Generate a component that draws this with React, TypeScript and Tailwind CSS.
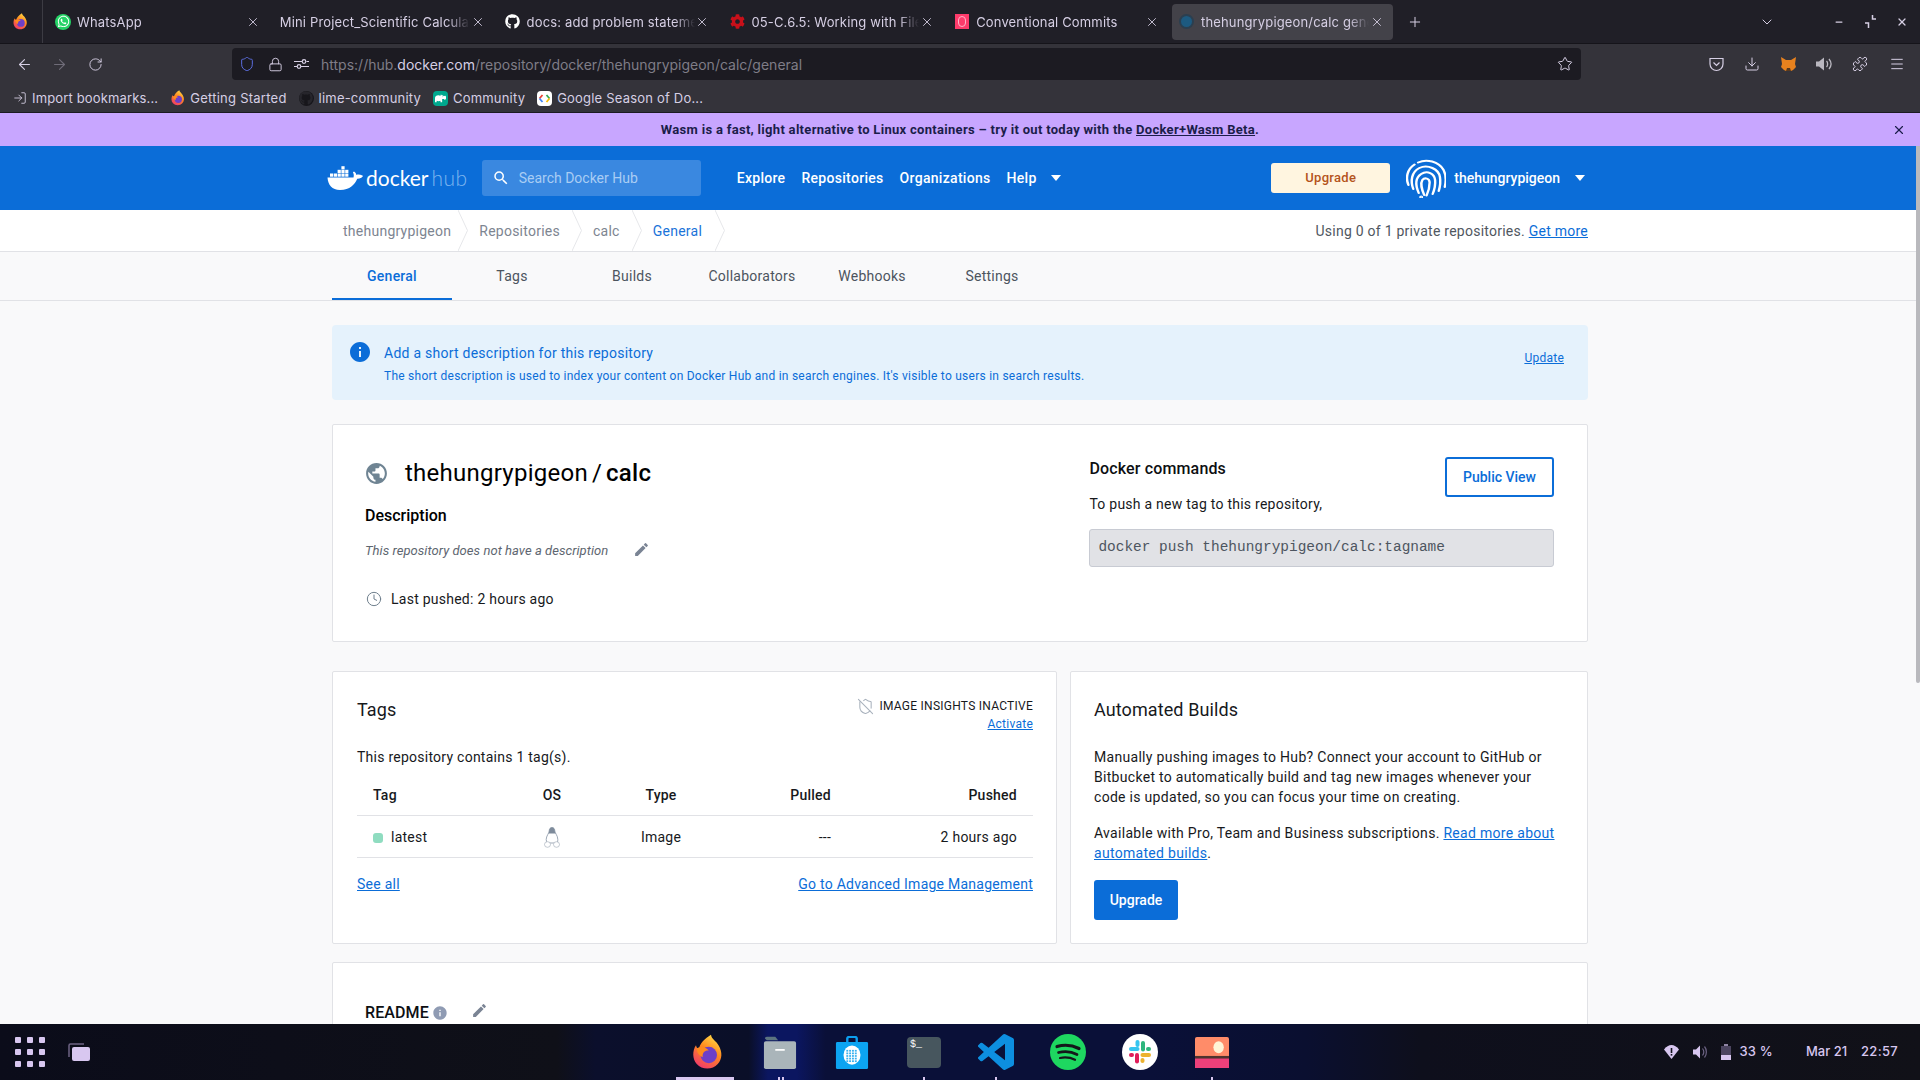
import React from "react";
import { ArrowLeft, ArrowRight, RotateCw, Lock, Star, Download, Puzzle, Menu, Shield, X, ChevronDown, Plus, Minus, Clock, ShieldOff, LogIn } from "lucide-react";
import { MdEdit, MdInfo, MdPublic, MdSearch } from "react-icons/md";
import { FaGithub, FaWhatsapp, FaCog, FaHippo } from "react-icons/fa";

function Firefox({ id, size }: { id: string; size: number }) {
  return (
    <svg width={size} height={size} viewBox="0 0 24 24" className="shrink-0">
      <defs>
        <linearGradient id={id} x1="0.8" y1="0" x2="0.3" y2="1">
          <stop offset="0" stopColor="#ffe04a" />
          <stop offset="0.45" stopColor="#ff8a1e" />
          <stop offset="1" stopColor="#f03a6a" />
        </linearGradient>
      </defs>
      <path d="M14 .5c.3 3 3.5 4 5 7 2.8 4.500 2.500 9.500-.5 12.500-3.500 4-10.500 4-14 0C1.500 16.800 1.500 11 4 7.500c.3 1.500 1 2.300 2 2.800C6.200 6.500 10 3 14 .5z" fill={`url(#${id})`} />
      <circle cx="12.500" cy="14" r="5.500" fill="#6d3fc8" />
      <path d="M4.500 9.500c3-1.500 6-1 8 1.500-2.500-.3-4.500 1.500-4 4.500-2.500-1-4-3.200-4-6z" fill="#ff8a1e" />
    </svg>
  );
}

function Tab({ title, icon, active, noIcon }: { title: string; icon?: React.ReactNode; active?: boolean; noIcon?: boolean }) {
  return (
    <div className={`w-[220.800px] h-9 rounded flex items-center shrink-0 pl-[7px] ${active ? "bg-[#434249]" : ""}`}>
      {icon && <span className="w-4 h-4 flex items-center justify-center mr-[6px] shrink-0">{icon}</span>}
      <span className={`${noIcon ? "w-[190px]" : "w-[168px]"} overflow-hidden whitespace-nowrap text-[13px] tracking-[0.15px] pt-[2px] text-[#d6cfe4] [mask-image:linear-gradient(to_right,black_88%,transparent)]`}>{title}</span>
      <X size={14} strokeWidth={1.500} className="text-[#d6cfe4] shrink-0 ml-auto mr-[9px]" />
    </div>
  );
}

function Chevron() {
  return (
    <svg width="10" height="41" viewBox="0 0 10 41" className="shrink-0">
      <path d="M0 0 L9.500 20.500 L0 41" fill="none" stroke="#e6e7ea" strokeWidth="1" />
    </svg>
  );
}

function Caret() {
  return (
    <svg width="10" height="6" viewBox="0 0 10 6" className="shrink-0">
      <polygon points="0,0 10,0 5,6" fill="#fff" />
    </svg>
  );
}

function Whale() {
  const rects: [number, number][] = [
    [3, 7.500], [6.800, 7.500], [10.600, 7.500], [14.400, 7.500], [18.200, 7.500],
    [10.600, 3.800], [14.400, 3.800], [18.200, 3.800], [14.400, 0.200],
  ];
  return (
    <svg width="37" height="24" viewBox="0 0 37 24" className="shrink-0">
      {rects.map(([x, y], i) => <rect key={i} x={x} y={y} width="3.200" height="3.200" fill="#fff" />)}
      <path d="M.5 11.500H26.500c.6-2 .3-3.600-.6-5.200l1.100-.9c1.400.9 2.200 2.100 2.400 3.500 1.700-.6 3.800-.4 6 .7l.6.400c-1.200 2.100-3.200 2.800-5.800 2.700C27.800 18.500 23 24 13 24 5 24 1 19 .5 11.500z" fill="#fff" />
    </svg>
  );
}

function Fingerprint() {
  return (
    <svg width="40" height="40" viewBox="3 0 33 40" preserveAspectRatio="none" fill="none" stroke="#fff" strokeWidth="2" strokeLinecap="round" className="shrink-0">
      <path d="M5 27C2.500 20 4 11 10 6.500" />
      <path d="M13 4.500C20 .5 30 3.500 34 12c2 5 2 12 1 17" />
      <path d="M9 31C6.500 23 7.500 14 14 10c7-4 16 1 17 9 .7 5 0 10-1 14" />
      <path d="M13.500 35C11 28 10.500 20 15.500 16c5-4 11-.5 11.500 6 .4 5-.5 9.500-2 14" />
      <path d="M18 37c-2-6-3.500-11-1.500-15 2-3 6-1.500 6 2.500 0 5-1 9-2.500 13" />
      <circle cx="15.500" cy="39" r=".6" />
    </svg>
  );
}

function Tux() {
  return (
    <svg width="16" height="21" viewBox="0 0 16 21" className="shrink-0 mt-[2px]">
      <path d="M8 .5c2 0 2.800 1.800 2.800 3.500 0 2 3 4.500 3 8.500 0 2-.5 3-1 3.500L3.500 16c-.7-.7-1.300-2-1.300-3.500C2.200 9 5.200 6 5.200 4 5.200 2.300 6 .5 8 .5z" fill="#fff" stroke="#8593a3" strokeWidth=".8" />
      <path d="M8 .5c2 0 2.800 1.800 2.800 3.500 0 1 .5 1.800 1 2.500H4.300c.5-.7.900-1.500.9-2.500C5.200 2.300 6 .5 8 .5z" fill="#7e8b9b" />
      <ellipse cx="3.500" cy="17.500" rx="3" ry="2.800" fill="#fff" stroke="#aab3bf" strokeWidth=".7" />
      <ellipse cx="12.500" cy="17.500" rx="3" ry="2.800" fill="#fff" stroke="#aab3bf" strokeWidth=".7" />
    </svg>
  );
}

function Dock() {
  return (
    <div className="flex items-center gap-[36px] ml-[600px]">
      <Firefox id="ffdock" size={36} />
      <svg width="34" height="33" viewBox="0 0 36 38" preserveAspectRatio="none" className="shrink-0 mx-[1px]">
        <path d="M2 3a2 2 0 0 1 2-2h9l3 4H4z" fill="#5c7480" />
        <rect x="1" y="6" width="34" height="32" rx="2" fill="#aab5ba" />
        <rect x="13" y="15" width="10" height="2" fill="#fff" />
      </svg>
      <svg width="34" height="33" viewBox="0 0 36 38" preserveAspectRatio="none" className="shrink-0 mx-[1px]">
        <path d="M13 7V3a2 2 0 0 1 2-2h6a2 2 0 0 1 2 2v4" fill="none" stroke="#0b9ef0" strokeWidth="2.500" />
        <rect x="1" y="7" width="34" height="31" rx="1.500" fill="#0ca4f2" />
        <ellipse cx="18" cy="22" rx="9" ry="11" fill="#fff" />
        <g fill="#39b1ef">
          {[16, 19, 22, 25, 28].map((y) => [12, 15, 18, 21].map((x) => <rect key={`${x}-${y}`} x={x} y={y} width="2" height="2" />))}
        </g>
      </svg>
      <div className="w-[34px] h-[31px] mx-[1px] rounded-sm bg-[#47565e] shrink-0 flex items-start justify-start pl-[3px] pt-[1px] text-[10px] leading-[14px] text-white [font-family:'Liberation_Mono',monospace]">$_</div>
      <svg width="36" height="36" viewBox="0 0 24 24" preserveAspectRatio="none" className="shrink-0">
        <path d="M23.150 2.587L18.210.21a1.494 1.494 0 0 0-1.705.29l-9.460 8.630-4.120-3.128a.999.999 0 0 0-1.276.057L.327 7.261A1 1 0 0 0 .326 8.740L3.899 12 .326 15.260a1 1 0 0 0 .001 1.479L1.650 17.940a.999.999 0 0 0 1.276.057l4.120-3.128 9.460 8.630a1.492 1.492 0 0 0 1.704.29l4.942-2.377A1.500 1.500 0 0 0 24 20.060V3.939a1.500 1.500 0 0 0-.85-1.352zm-5.146 14.861L10.826 12l7.178-5.448v10.896z" fill="#0d8fe0" />
      </svg>
      <svg width="36" height="36" viewBox="0 0 36 36" fill="none" stroke="#14171a" strokeLinecap="round" className="shrink-0">
        <circle cx="18" cy="18" r="18" fill="#1ed760" stroke="none" />
        <path d="M7 12.500c7-2 15-1.500 22 2" strokeWidth="3.200" />
        <path d="M8.500 18.500c6-1.500 13-1 18.500 2" strokeWidth="2.700" />
        <path d="M10 24c5-1 10-.7 15 1.800" strokeWidth="2.200" />
      </svg>
      <svg width="36" height="36" viewBox="0 0 36 36" strokeLinecap="round" fill="none" className="shrink-0">
        <circle cx="18" cy="18" r="18" fill="#fff" />
        <path d="M9 15h6.500" stroke="#36c5f0" strokeWidth="4" />
        <path d="M15.500 8v3" stroke="#36c5f0" strokeWidth="4" />
        <path d="M21 9v6.500" stroke="#2eb67d" strokeWidth="4" />
        <path d="M26 15h1" stroke="#2eb67d" strokeWidth="4" />
        <path d="M27 21h-6.500" stroke="#ecb22e" strokeWidth="4" />
        <path d="M20.500 27v-1" stroke="#ecb22e" strokeWidth="4" />
        <path d="M15 21v6.500" stroke="#e01e5a" strokeWidth="4" />
        <path d="M9 21h1" stroke="#e01e5a" strokeWidth="4" />
      </svg>
      <svg width="34" height="31" viewBox="0 0 36 36" preserveAspectRatio="none" className="shrink-0 mx-[1px]">
        <rect x="0" y="0" width="36" height="36" rx="2" fill="#ff8c69" />
        <rect x="0" y="24" width="36" height="12" fill="#ec407a" />
        <rect x="0" y="22" width="36" height="3" fill="#4e342e" />
        <ellipse cx="25" cy="12" rx="5.500" ry="7" fill="#fff4d6" />
      </svg>
    </div>
  );
}

export default function App() {
  return (
    <div className="w-[1920px] h-[1080px] overflow-hidden flex flex-col bg-[#f9f9fa] [font-family:Roboto,sans-serif]">
      {/* Browser chrome */}
      <div className="shrink-0 [font-family:Inter,sans-serif]">
        <div className="h-[44px] bg-[#201f27] flex items-center border-b border-[#15141a]">
          <div className="w-[43px] h-full flex items-center justify-center border-r border-[#3c3b43] pr-[2px]">
            <Firefox id="fftop" size={17} />
          </div>
          <div className="flex items-center gap-[4px] ml-[5px]">
            <Tab title="WhatsApp" icon={<span className="w-4 h-4 rounded-full bg-[#25d366] flex items-center justify-center"><FaWhatsapp size={13} color="#fff" /></span>} />
            <Tab title="Mini Project_Scientific Calculator" noIcon />
            <Tab title="docs: add problem statement" icon={<FaGithub size={15} color="#fff" />} />
            <Tab title="05-C.6.5: Working with Files" icon={<FaCog size={15} color="#c8101a" />} />
            <Tab title="Conventional Commits" icon={<span className="w-[14px] h-[15px] bg-[#fe3b6b] flex items-center justify-center"><span className="w-[8px] h-[11px] rounded-full border border-[#ffb4c8]" /></span>} />
            <Tab active title="thehungrypigeon/calc general" icon={<span className="w-[15px] h-[15px] rounded-full bg-[#1d5a80] border-2 border-[#2b3f50]" />} />
          </div>
          <Plus size={16} strokeWidth={1.500} className="text-[#d6cfe4] ml-[14px]" />
          <ChevronDown size={16} strokeWidth={1.500} className="text-[#d6cfe4] ml-[336px]" />
          <Minus size={10} strokeWidth={3} className="text-[#d6cfe4] ml-[59px]" />
          <svg width="11" height="13" viewBox="0 0 11 13" fill="none" stroke="#d6cfe4" strokeWidth="1.500" className="ml-[21px]"><path d="M7.500 0v4H11M0 8h3.500v5" /></svg>
          <X size={12} strokeWidth={2.500} className="text-[#d6cfe4] ml-[20px]" />
        </div>
        <div className="h-[40px] bg-[#34333a] flex items-center">
          <ArrowLeft size={17} strokeWidth={1.500} className="text-[#d6cfe4] ml-[16px]" />
          <ArrowRight size={17} strokeWidth={1.500} className="text-[#6f6c78] ml-[18px]" />
          <RotateCw size={15} strokeWidth={1.500} className="text-[#d6cfe4] ml-[20px] mr-[1px]" />
          <div className="w-[1349px] h-[32px] ml-[128px] bg-[#1c1b22] rounded flex items-center">
            <Shield size={16} strokeWidth={1.500} className="text-[#5c6ee0] ml-[7px]" />
            <Lock size={15} strokeWidth={1.500} className="text-[#d6cfe4] ml-[13px]" />
            <svg width="15" height="10" viewBox="0 0 15 10" fill="none" stroke="#d6cfe4" strokeWidth="1.200" className="ml-[11px]"><path d="M0 2.500h8M12.500 2.500H15M0 7.500h3M7 7.500h8" /><circle cx="10" cy="2.500" r="1.800" /><circle cx="5" cy="7.500" r="1.800" /></svg>
            <span className="ml-[12px] text-[14px] text-[#7f7d87] whitespace-nowrap">https://hub.<span className="text-[#d6cfe4]">docker.com</span>/repository/docker/thehungrypigeon/calc/general</span>
            <Star size={16} strokeWidth={1.500} className="text-[#d6cfe4] ml-auto mr-[8px]" />
          </div>
          <svg width="15" height="15" viewBox="0 0 15 15" fill="none" stroke="#d6cfe4" strokeWidth="1.200" className="ml-[128px]"><path d="M1 1.500h13V7c0 3.500-3 6.500-6.500 6.500S1 10.500 1 7z" /><path d="M4.500 5.500l3 3 3-3" /></svg>
          <Download size={16} strokeWidth={1.500} className="text-[#d6cfe4] ml-[20px]" />
          <svg width="17" height="16" viewBox="0 0 17 16" className="ml-[20px]"><path d="M1 1l5 3h5l5-3-1 7 1 3-3 3-2 1H6l-2-1-3-3 1-3z" fill="#e8821e" /><path d="M6 15l1-3h3l1 3z" fill="#5a3a1e" /></svg>
          <svg width="18" height="16" viewBox="0 0 18 16" fill="none" className="ml-[18px]"><path d="M1 5.500h3L9 1.500v13l-5-4H1z" fill="#b9b7bf" /><path d="M11.500 5c1.500 1.500 1.500 4.500 0 6M14 3c2.500 3 2.500 7 0 10" stroke="#b9b7bf" strokeWidth="1.300" /></svg>
          <Puzzle size={16} strokeWidth={1.500} className="text-[#d6cfe4] ml-[19px]" />
          <Menu size={16} strokeWidth={1.500} className="text-[#d6cfe4] ml-[21px]" />
        </div>
        <div className="h-[28px] bg-[#34333a] flex items-center text-[13px] text-[#d6cfe4] tracking-[0.2px] border-b border-[#1c1b22] box-content">
          <LogIn size={14} strokeWidth={1.500} className="ml-[13px]" />
          <span className="ml-[5px] pt-[2px] whitespace-nowrap tracking-[0.15px]">Import bookmarks...</span>
          <span className="ml-[12px]"><Firefox id="ffbm" size={16} /></span>
          <span className="ml-[4px] pt-[2px] whitespace-nowrap tracking-[0.25px]">Getting Started</span>
          <span className="w-[15px] h-[15px] ml-[12px] rounded-full bg-[#17161b] flex items-center justify-center"><FaGithub size={14} color="#26252b" /></span>
          <span className="ml-[5px] pt-[2px] whitespace-nowrap">lime-community</span>
          <span className="w-[15px] h-[15px] ml-[12px] rounded-sm bg-[#00a88e] flex items-center justify-center"><FaHippo size={11} color="#fff" /></span>
          <span className="ml-[5px] pt-[2px] whitespace-nowrap">Community</span>
          <span className="w-[15px] h-[15px] ml-[12px] rounded-sm bg-white flex items-center justify-center">
            <svg width="13" height="9" viewBox="0 0 13 9" fill="none" strokeWidth="1.800"><path d="M4.500 1L1.500 4.500" stroke="#ea4335" /><path d="M1.500 4.500L4.500 8" stroke="#4285f4" /><path d="M8.500 1l3 3.500" stroke="#34a853" /><path d="M11.500 4.500L8.500 8" stroke="#fbbc05" /></svg>
          </span>
          <span className="ml-[5px] pt-[2px] whitespace-nowrap">Google Season of Do...</span>
        </div>
      </div>

      {/* Page */}
      <div className="flex-1 min-h-0 overflow-hidden relative tracking-[0.25px]">
        <div className="absolute right-0 top-0 w-[4px] h-[570px] bg-[#b9b9bd] rounded-full" />

        <div className="h-[33px] bg-[#c8a6ff] flex items-center justify-center text-[13px] font-bold text-[#1b1d4a] tracking-[0.3px] relative">
          <span>Wasm is a fast, light alternative to Linux containers – try it out today with the <span className="underline">Docker+Wasm Beta</span>.</span>
          <X size={14} strokeWidth={2} className="absolute right-[14px] top-[10px]" />
        </div>

        <div className="h-[64px] bg-[#0b6dd8] flex items-center pl-[327px] pr-[335px]">
          <Whale />
          <span className="ml-[2px] text-[21px] leading-none text-white [font-family:Lato,sans-serif] tracking-[0px] -mt-[1px]">docker</span>
          <span className="ml-[3px] text-[21px] leading-none text-[#7db5ef] [font-family:Lato,sans-serif] font-light tracking-[0.5px] -mt-[1px]">hub</span>
          <div className="ml-[14px] w-[219px] h-[36px] rounded-[3px] bg-[#3a88e0] flex items-center tracking-normal shrink-0">
            <MdSearch size={18} color="#fff" className="ml-[10px]" />
            <span className="ml-[9px] text-[14px] text-[#a9cdf4]">Search Docker Hub</span>
          </div>
          <div className="flex items-center text-[14px] font-medium text-white tracking-[0.3px]">
            <span className="ml-[36px]">Explore</span>
            <span className="ml-[16px]">Repositories</span>
            <span className="ml-[16px]">Organizations</span>
            <span className="ml-[16px]">Help</span>
            <span className="ml-[14px]"><Caret /></span>
          </div>
          <div className="ml-auto w-[119px] h-[30px] rounded-[3px] bg-[#fff5e0] flex items-center justify-center text-[13px] font-medium text-[#b4531b] tracking-[0.3px]">Upgrade</div>
          <span className="ml-[16px]"><Fingerprint /></span>
          <span className="ml-[8px] text-[14px] font-medium text-white tracking-normal">thehungrypigeon</span>
          <span className="ml-[15px]"><Caret /></span>
        </div>

        <div className="h-[42px] bg-white border-b border-[#e1e2e6]">
          <div className="w-[1256px] mx-auto h-[41px] flex items-center text-[14px] text-[#7d8591]">
            <span className="ml-[11px] pt-[2px]">thehungrypigeon</span>
            <span className="ml-[7px]"><Chevron /></span>
            <span className="ml-[11px] pt-[2px]">Repositories</span>
            <span className="ml-[12px]"><Chevron /></span>
            <span className="ml-[11px] pt-[2px]">calc</span>
            <span className="ml-[12px]"><Chevron /></span>
            <span className="ml-[11px] pt-[2px] text-[#1a73d9]">General</span>
            <span className="ml-[13px]"><Chevron /></span>
            <span className="ml-auto pt-[2px] text-[#50575f]">Using 0 of 1 private repositories. <span className="text-[#0b6dd8] underline">Get more</span></span>
          </div>
        </div>

        <div className="border-b border-[#e1e2e6]">
          <div className="w-[1256px] mx-auto flex h-[48px] text-[14px] text-[#4c545e]">
            <div className="w-[120px] flex items-center justify-center border-b-2 border-[#0b6dd8] text-[#0b6dd8] font-medium pt-[2px]">General</div>
            <div className="w-[120px] flex items-center justify-center">Tags</div>
            <div className="w-[120px] flex items-center justify-center">Builds</div>
            <div className="w-[120px] flex items-center justify-center">Collaborators</div>
            <div className="w-[120px] flex items-center justify-center">Webhooks</div>
            <div className="w-[120px] flex items-center justify-center">Settings</div>
          </div>
        </div>

        <div className="w-[1256px] mx-auto pt-[24px]">
          <div className="h-[75px] rounded bg-[#e5f2fc] flex items-center text-[#0b6dd8]">
            <MdInfo size={24} color="#0b6dd8" className="ml-[16px] -mt-[21px]" />
            <div className="ml-[12px] pt-[2px]">
              <div className="text-[14px] leading-[20px]">Add a short description for this repository</div>
              <div className="text-[12px] leading-[18px] mt-[4px]">The short description is used to index your content on Docker Hub and in search engines. It's visible to users in search results.</div>
            </div>
            <span className="ml-auto mr-[24px] text-[12px] underline -mt-[9px]">Update</span>
          </div>

          <div className="mt-[24px] h-[218px] bg-white border border-[#e1e2e6] rounded-[2px] pl-[32px] pr-[33px] pt-[32px] flex">
            <div className="w-[725px]">
              <div className="flex items-center h-[32px]">
                <MdPublic size={25} color="#6f8493" className="ml-[-1px]" />
                <span className="ml-[16px] text-[24px] text-black">thehungrypigeon<span className="mx-[4px]">/</span><span className="font-medium">calc</span></span>
              </div>
              <div className="mt-[15px] text-[16px] leading-[24px] font-medium text-black tracking-normal">Description</div>
              <div className="mt-[13px] flex items-center h-[20px]">
                <span className="text-[13px] italic text-[#5e6670] tracking-[0.05px]">This repository does not have a description</span>
                <MdEdit size={17} color="#7a8494" className="ml-[25px] -mt-[4px]" />
              </div>
              <div className="mt-[28px] flex items-center h-[20px]">
                <Clock size={16} strokeWidth={1.500} className="text-[#6f7f8d] ml-[1px]" />
                <span className="ml-[9px] text-[14px] text-[#17191c]">Last pushed: 2 hours ago</span>
              </div>
            </div>
            <div className="w-[465px]">
              <div className="flex justify-between h-[40px]">
                <span className="text-[16px] leading-[24px] font-medium text-[#0d0f12] tracking-[0.15px]">Docker commands</span>
                <div className="w-[109px] h-[40px] rounded-[3px] border-2 border-[#0b6dd8] flex items-center justify-center text-[14px] font-medium text-[#0b6dd8] tracking-normal">Public View</div>
              </div>
              <div className="-mt-[3px] text-[14px] leading-[20px] text-[#17191c]">To push a new tag to this repository,</div>
              <div className="mt-[15px] h-[38px] rounded-[3px] bg-[#e1e2e6] border border-[#c8cbd3] flex items-center pl-[8px] pb-[1px] text-[14.450px] text-[#4d5560] tracking-normal [font-family:'Liberation_Mono',monospace]">docker push thehungrypigeon/calc:tagname</div>
            </div>
          </div>

          <div className="mt-[29px] flex gap-[13px]">
            <div className="w-[725px] h-[273px] bg-white border border-[#e1e2e6] rounded-[2px] pl-[24px] pr-[23px] pt-[24px]">
              <div className="flex justify-between items-start">
                <span className="text-[18px] leading-[28px] text-[#17191c] tracking-[0.1px]">Tags</span>
                <div className="mt-[1px] text-right text-[12px] leading-[18px]">
                  <div className="flex items-center">
                    <ShieldOff size={17} strokeWidth={1.500} className="text-[#a9b2bd] mr-[6px]" />
                    <span className="text-[#17191c]">IMAGE INSIGHTS INACTIVE</span>
                  </div>
                  <div className="text-[#0b6dd8] underline">Activate</div>
                </div>
              </div>
              <div className="mt-[14px] text-[14px] leading-[20px] text-[#17191c]">This repository contains 1 tag(s).</div>
              <div className="mt-[8px] text-[14px] text-[#17191c]">
                <div className="grid grid-cols-[150px_90px_128px_106px_202px] h-[41px] items-center border-b border-[#e1e2e6] font-medium">
                  <span className="pl-[16px]">Tag</span>
                  <span className="text-center">OS</span>
                  <span className="text-center">Type</span>
                  <span className="text-right">Pulled</span>
                  <span className="text-right pr-[16px]">Pushed</span>
                </div>
                <div className="grid grid-cols-[150px_90px_128px_106px_202px] h-[42px] items-center border-b border-[#e1e2e6]">
                  <span className="pl-[16px] pt-[2px] flex items-center"><span className="w-[10px] h-[10px] rounded-[3px] bg-[#8fdcc0] mr-[8px]" />latest</span>
                  <span className="flex justify-center"><Tux /></span>
                  <span className="text-center pt-[2px]">Image</span>
                  <span className="text-right pt-[2px]">---</span>
                  <span className="text-right pr-[16px] pt-[2px]">2 hours ago</span>
                </div>
              </div>
              <div className="mt-[16px] flex justify-between text-[14px] leading-[20px] text-[#0b6dd8] underline">
                <span>See all</span>
                <span>Go to Advanced Image Management</span>
              </div>
            </div>
            <div className="w-[518px] h-[273px] bg-white border border-[#e1e2e6] rounded-[2px] pl-[23px] pt-[24px] tracking-[0.3px]">
              <div className="text-[18px] leading-[28px] text-[#17191c] tracking-[0.1px]">Automated Builds</div>
              <div className="w-[462px] mt-[23px] text-[14px] leading-[20px] text-[#17191c]">Manually pushing images to Hub? Connect your account to GitHub or Bitbucket to automatically build and tag new images whenever your code is updated, so you can focus your time on creating.</div>
              <div className="w-[462px] mt-[16px] text-[14px] leading-[20px] text-[#17191c]">Available with Pro, Team and Business subscriptions. <span className="text-[#0b6dd8] underline">Read more about automated builds</span>.</div>
              <div className="mt-[17px] w-[84px] h-[40px] rounded-[3px] bg-[#0b6dd8] flex items-center justify-center text-[14px] font-medium text-white tracking-normal">Upgrade</div>
            </div>
          </div>

          <div className="mt-[18px] h-[200px] bg-white border border-[#e1e2e6] rounded-[2px] pl-[32px] pt-[38px]">
            <div className="flex items-center h-[24px]">
              <span className="text-[16px] font-medium text-[#0d0f12] tracking-[0.1px]">README</span>
              <MdInfo size={16} color="#8f9bb3" className="ml-[3px]" />
              <MdEdit size={17} color="#7a8494" className="ml-[23px] -mt-[5px]" />
            </div>
          </div>
        </div>
      </div>

      {/* Taskbar */}
      <div className="h-[56px] shrink-0 bg-[linear-gradient(90deg,#0b0c1a_0%,#0f1018_29%,#0b0f2c_31%,#0a0f28_39%,#0b1660_40%,#0b1660_41.500%,#0a1038_43%,#0a1038_60%,#0a0f30_68%,#0e0f1c_74%,#111118_100%)] flex items-center relative [font-family:Inter,sans-serif]">
        <div className="grid grid-cols-3 gap-x-[6px] gap-y-[6px] ml-[15px]">
          {Array.from({ length: 9 }).map((_, i) => <span key={i} className="w-[6px] h-[6px] rounded-[1px] bg-[#d8c7f0]" />)}
        </div>
        <svg width="22" height="18" viewBox="0 0 22 18" className="ml-[23px]"><path d="M1 14V2.500A1.500 1.500 0 0 1 2.500 1H16" fill="none" stroke="#6d6384" strokeWidth="1.500" /><rect x="4" y="4" width="18" height="14" rx="2" fill="#d8c7f0" /></svg>
        <Dock />
        <div className="ml-auto mr-[22px] flex items-center text-[13px] font-medium text-[#d8c7f0]">
          <svg width="15" height="14" viewBox="0 0 15 14"><path d="M7.500 14L0 4.500C2 1.500 5 0 7.500 0s5.500 1.500 7.500 4.500z" fill="#d8c7f0" /><rect x="6.700" y="3" width="1.600" height="5" fill="#11121c" /><rect x="6.700" y="9" width="1.600" height="1.600" fill="#11121c" /></svg>
          <svg width="16" height="16" viewBox="0 0 16 16" fill="none" className="ml-[13px]"><path d="M1 5.500h3L8 1.500v13l-4-4H1z" fill="#d8c7f0" /><path d="M10.500 4.500c1.500 2 1.500 5 0 7M12.500 2.500c2.500 3 2.500 8 0 11" stroke="#6d6384" strokeWidth="1.200" /></svg>
          <svg width="10" height="16" viewBox="0 0 10 16" className="ml-[13px]"><rect x="3" y="0" width="4" height="2" fill="#8f84a3" /><rect x="0" y="2" width="10" height="14" fill="#4c4560" /><rect x="0" y="11" width="10" height="5" fill="#d8c7f0" /></svg>
          <span className="ml-[8px] tracking-[0.2px]">33 %</span>
          <span className="ml-[33px]">Mar 21</span>
          <span className="ml-[14px] tracking-[0.3px]">22:57</span>
        </div>
        <span className="absolute bottom-0 left-[676px] w-[58px] h-[3px] bg-[#d8c7f0]" />
        <span className="absolute bottom-0 left-[778px] w-[2px] h-[3px] bg-[#d8c7f0]" />
        <span className="absolute bottom-0 left-[782px] w-[2px] h-[3px] bg-[#d8c7f0]" />
        <span className="absolute bottom-0 left-[923px] w-[2px] h-[3px] bg-[#d8c7f0]" />
        <span className="absolute bottom-0 left-[995px] w-[2px] h-[3px] bg-[#d8c7f0]" />
        <span className="absolute bottom-0 left-[1211px] w-[2px] h-[3px] bg-[#d8c7f0]" />
      </div>
    </div>
  );
}
